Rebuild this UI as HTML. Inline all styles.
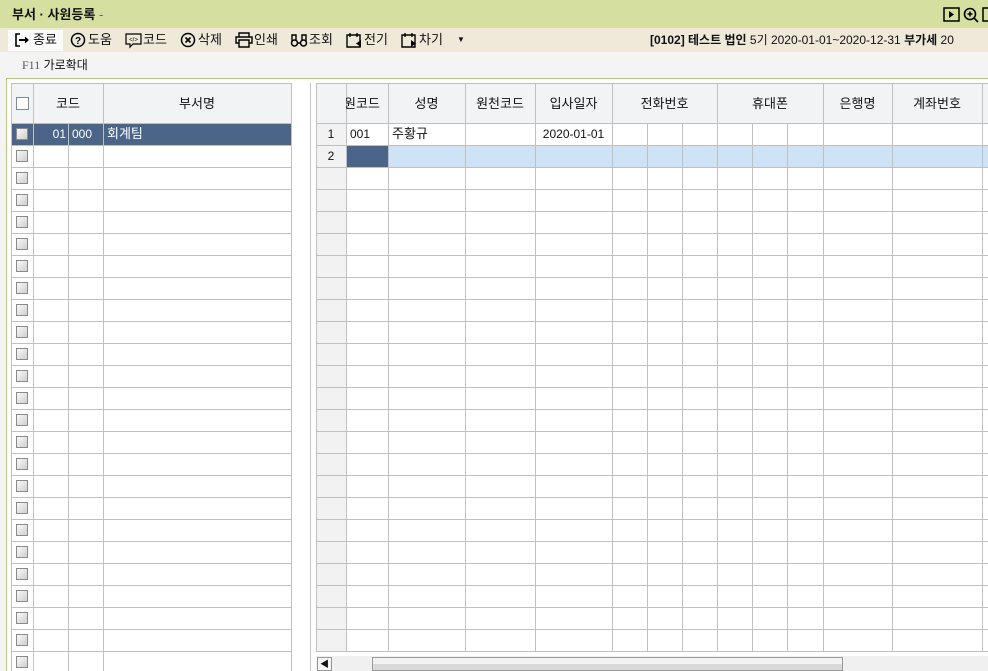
<!DOCTYPE html><html><head><meta charset="utf-8"><style>
*{margin:0;padding:0;box-sizing:border-box}
body{width:988px;height:671px;overflow:hidden;background:#f4f4f4;font-family:"Liberation Sans","Noto Sans CJK KR","NanumGothic",sans-serif;font-size:12px;color:#111;position:relative}
.a{position:absolute}
#title{left:0;top:0;width:988px;height:28px;background:#d4dfa0;font-weight:bold;font-size:13px;padding:6px 0 0 12px;line-height:18px}
#tb{left:0;top:28px;width:988px;height:24px;background:#efe9da}
.tbi{position:absolute;top:30px;font-size:13px;height:20px;line-height:20px;display:flex;align-items:center;white-space:nowrap}
.tbi svg{margin-right:1px}
#main{left:6px;top:78px;width:982px;height:593px;background:#fff;border-top:1px solid #b8d238;border-left:1px solid #b8d238}
.vl{position:absolute;width:1px;background:#c0c0c0}
.hl{position:absolute;height:1px;background:#c0c0c0}
.hd{position:absolute;top:84px;height:39px;line-height:39px;text-align:center;font-size:13px}
.c{position:absolute;height:22px;line-height:22px}
.cb{position:absolute;left:16px;width:12px;height:12px;border:1px solid #8a8a8a;background:linear-gradient(135deg,#f8f8f8,#cfcfcf)}
</style></head><body>
<div class="a" id="title">부서 · 사원등록 <span style="font-weight:normal;color:#666">-</span></div>
<svg class="a" style="left:943px;top:7px" width="45" height="16"><rect x="1" y="1" width="15" height="13" fill="none" stroke="#000" stroke-width="1.5"/><path d="M6 4v7l5-3.5z" fill="#000"/><circle cx="27" cy="7" r="5.5" fill="none" stroke="#000" stroke-width="1.6"/><path d="M31 11l4 4M24.5 7h5M27 4.5v5" stroke="#000" stroke-width="1.6"/><rect x="40" y="1" width="6" height="13" fill="none" stroke="#000" stroke-width="1.5"/></svg>
<div class="a" id="tb"></div>
<div class="a" style="left:8px;top:30px;width:55px;height:21px;background:#fafafa"></div>
<div class="tbi" style="left:14px"><svg width="18" height="16"><path d="M6 2H2v12h4" fill="none" stroke="#000" stroke-width="1.6"/><path d="M5 8h8" stroke="#000" stroke-width="2"/><path d="M11 4.5l4 3.5-4 3.5z" fill="#000"/></svg>종료</div>
<div class="tbi" style="left:70px"><svg width="17" height="16"><circle cx="8" cy="8" r="6.5" fill="none" stroke="#000" stroke-width="1.5"/><text x="8" y="12" font-size="10" font-weight="bold" text-anchor="middle" font-family="Liberation Sans">?</text></svg>도움</div>
<div class="tbi" style="left:125px"><svg width="17" height="17"><path d="M1 2h15v10H8l-3 3v-3H1z" fill="none" stroke="#000" stroke-width="1.2"/><text x="8.5" y="9.5" font-size="6" text-anchor="middle" font-family="Liberation Sans">&lt;/&gt;</text></svg>코드</div>
<div class="tbi" style="left:180px"><svg width="17" height="16"><circle cx="8" cy="8" r="6.5" fill="none" stroke="#000" stroke-width="1.5"/><path d="M5.5 5.5l5 5M10.5 5.5l-5 5" stroke="#000" stroke-width="1.6"/></svg>삭제</div>
<div class="tbi" style="left:235px"><svg width="18" height="16"><path d="M4 5V1h10v4M4 11H1V5h16v6h-3M4 8h10v7H4z" fill="none" stroke="#000" stroke-width="1.4"/></svg>인쇄</div>
<div class="tbi" style="left:290px"><svg width="18" height="16"><circle cx="4.5" cy="11" r="3" fill="none" stroke="#000" stroke-width="1.5"/><circle cx="13.5" cy="11" r="3" fill="none" stroke="#000" stroke-width="1.5"/><path d="M2 9V3h4v5M16 9V3h-4v5M7.5 11h3" stroke="#000" stroke-width="1.4" fill="none"/></svg>조회</div>
<div class="tbi" style="left:345px"><svg width="18" height="17"><path d="M2 3h13v12H2z" fill="none" stroke="#000" stroke-width="1.4"/><path d="M5 1v4M12 1v4" stroke="#000" stroke-width="1.4"/><path d="M16 8v7l-5-3.5z" fill="#000"/></svg>전기</div>
<div class="tbi" style="left:400px"><svg width="18" height="17"><path d="M2 3h13v12H2z" fill="none" stroke="#000" stroke-width="1.4"/><path d="M5 1v4M12 1v4" stroke="#000" stroke-width="1.4"/><path d="M11 8v7l5-3.5z" fill="#000"/></svg>차기</div>
<div class="tbi" style="left:457px;font-size:8px">▼</div>
<div class="tbi" style="left:650px;font-size:12px"><b>[0102] 테스트 법인</b>&nbsp;5기 2020-01-01~2020-12-31&nbsp;<b>부가세</b>&nbsp;20</div>
<div class="a" style="left:22px;top:56px;font-size:12px;line-height:18px"><span style="font-family:'Liberation Serif';color:#555">F11</span> 가로확대</div>
<div class="a" id="main"></div>
<div class="a" style="left:11px;top:83px;width:281px;height:40px;background:#f2f3f5"></div>
<div class="a" style="left:11px;top:123px;width:281px;height:22px;background:#4a6587"></div>
<div class="a" style="left:316px;top:83px;width:672px;height:40px;background:#f2f3f5"></div>
<div class="a" style="left:316px;top:123px;width:30px;height:528px;background:#f2f2f2"></div>
<div class="a" style="left:346px;top:145px;width:42px;height:22px;background:#4a6587"></div>
<div class="a" style="left:388px;top:145px;width:600px;height:22px;background:#cfe3f7"></div>
<div id="g"></div>
<div class="cb" style="top:97px;left:16px;width:13px;height:13px;background:#fff;border-color:#7a8a99"></div>
<div class="hd" style="left:33px;width:70px">코드</div>
<div class="hd" style="left:103px;width:188px">부서명</div>
<div class="c" style="left:33px;top:123px;width:33px;text-align:right;color:#fff">01</div>
<div class="c" style="left:72px;top:123px;color:#fff">000</div>
<div class="c" style="left:107px;top:123px;color:#fff;font-size:13px">회계팀</div>
<div class="hd" style="left:346px;width:42px;overflow:hidden"><span style="margin-left:-10px">원코드</span></div>
<div class="hd" style="left:388px;width:77px">성명</div>
<div class="hd" style="left:465px;width:70px">원천코드</div>
<div class="hd" style="left:535px;width:77px">입사일자</div>
<div class="hd" style="left:612px;width:105px">전화번호</div>
<div class="hd" style="left:717px;width:106px">휴대폰</div>
<div class="hd" style="left:823px;width:69px">은행명</div>
<div class="hd" style="left:892px;width:90px">계좌번호</div>
<div class="c" style="left:316px;top:123px;width:30px;text-align:center">1</div>
<div class="c" style="left:316px;top:145px;width:30px;text-align:center">2</div>
<div class="c" style="left:350px;top:123px">001</div>
<div class="c" style="left:392px;top:123px;font-size:13px">주황규</div>
<div class="c" style="left:535px;top:123px;width:77px;text-align:center">2020-01-01</div>
<div class="a" style="left:316px;top:656px;width:672px;height:15px;background:#f0f0f0"></div>
<div class="a" style="left:317px;top:657px;width:15px;height:14px;border:1px solid #999;background:#f4f4f4;font-size:9px;line-height:12px;text-align:center">◀</div>
<div class="a" style="left:372px;top:657px;width:471px;height:14px;border:1px solid #999;background:linear-gradient(#f2f2f2 50%,#d9d9d9 50%)"></div>
<script>
var h='';
function V(x,t,b){h+='<div class="vl" style="left:'+x+'px;top:'+t+'px;height:'+(b-t)+'px"></div>'}
function H(l,r,y){h+='<div class="hl" style="left:'+l+'px;width:'+(r-l)+'px;top:'+y+'px"></div>'}
H(11,292,83);H(316,988,83);
for(var y=123;y<=671;y+=22){H(11,292,y);if(y<=651)H(316,988,y);}
[11,33,103,291].forEach(function(x){V(x,83,671)});V(68,123,671);V(310,83,671);
[316,346,388,465,535,612,717,823,892,982].forEach(function(x){V(x,83,651)});
[647,682,752,787].forEach(function(x){V(x,123,651)});
for(var y=123;y<671;y+=22)h+='<div class="cb" style="top:'+(y+5)+'px"></div>';
document.getElementById('g').innerHTML=h;
</script>
</body></html>
